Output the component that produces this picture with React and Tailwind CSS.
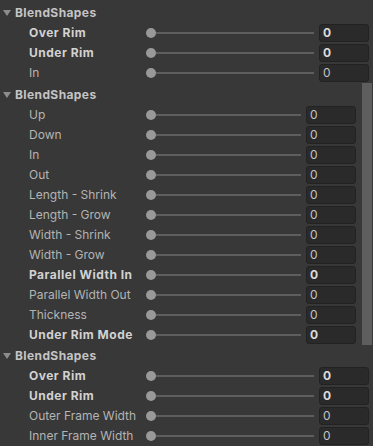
const font = { fontFamily: "Inter, 'Noto Sans', sans-serif" }

const Caret = () => (
    <svg width="8" height="7" viewBox="0 0 8 7" className="mr-[4px] ml-[3px]">
        <polygon points="0,0 8,0 4,6" fill="#8c8c8c" />
    </svg>
)

const Header = ({ title }) => (
    <div className="h-[20px] flex items-center">
        <Caret />
        <span className="text-[12px] font-bold tracking-[0.4px] text-[#c4c4c4]">{title}</span>
    </div>
)

const Row = ({ label, bold }) => (
    <div className="h-[20px] flex items-center">
        <div className={`w-[146px] pl-[29px] text-[12px] whitespace-nowrap ${bold ? "font-bold tracking-[0.5px] text-[#d2d2d2]" : "text-[#b4b4b4]"}`}>
            {label}
        </div>
        <div className="flex-1 flex items-center">
            <div className="w-[10px] h-[10px] rounded-full bg-[#999999] shrink-0" />
            <div className="flex-1 h-[2px] bg-[#5e5e5e]" />
        </div>
        <div className={`ml-[5px] w-[50px] h-[18px] rounded-[3px] bg-[#2a2a2a] border border-[#222222] flex items-center pl-[3px] text-[12px] ${bold ? "font-bold text-[#dcdcdc]" : "text-[#c4c4c4]"}`}>
            0
        </div>
    </div>
)

const Section = ({ rows }) => (
    <>
        <Header title="BlendShapes" />
        {rows.map(([l, b]) => (
            <Row key={l} label={l} bold={b} />
        ))}
    </>
)

export default function App() {
    return (
        <div className="w-[373px] h-[446px] bg-[#383838] overflow-hidden" style={font}>
            <div className="pt-[3px] pr-[4px]">
                <Section rows={[["Over Rim", true], ["Under Rim", true], ["In", false]]} />
            </div>
            <div className="flex">
                <div className="flex-1 pt-[2px]">
                    <Section
                        rows={[
                            ["Up"], ["Down"], ["In"], ["Out"], ["Length - Shrink"], ["Length - Grow"],
                            ["Width - Shrink"], ["Width - Grow"], ["Parallel Width In", true],
                            ["Parallel Width Out"], ["Thickness"], ["Under Rim Mode", true],
                        ]}
                    />
                </div>
                <div className="w-[17px] pl-[6px] pr-[1px]">
                    <div className="w-[10px] h-full bg-[#5e5e5e]" />
                </div>
            </div>
            <div className="pt-[1px] pr-[4px]">
                <Section
                    rows={[["Over Rim", true], ["Under Rim", true], ["Outer Frame Width"], ["Inner Frame Width"]]}
                />
            </div>
        </div>
    )
}
